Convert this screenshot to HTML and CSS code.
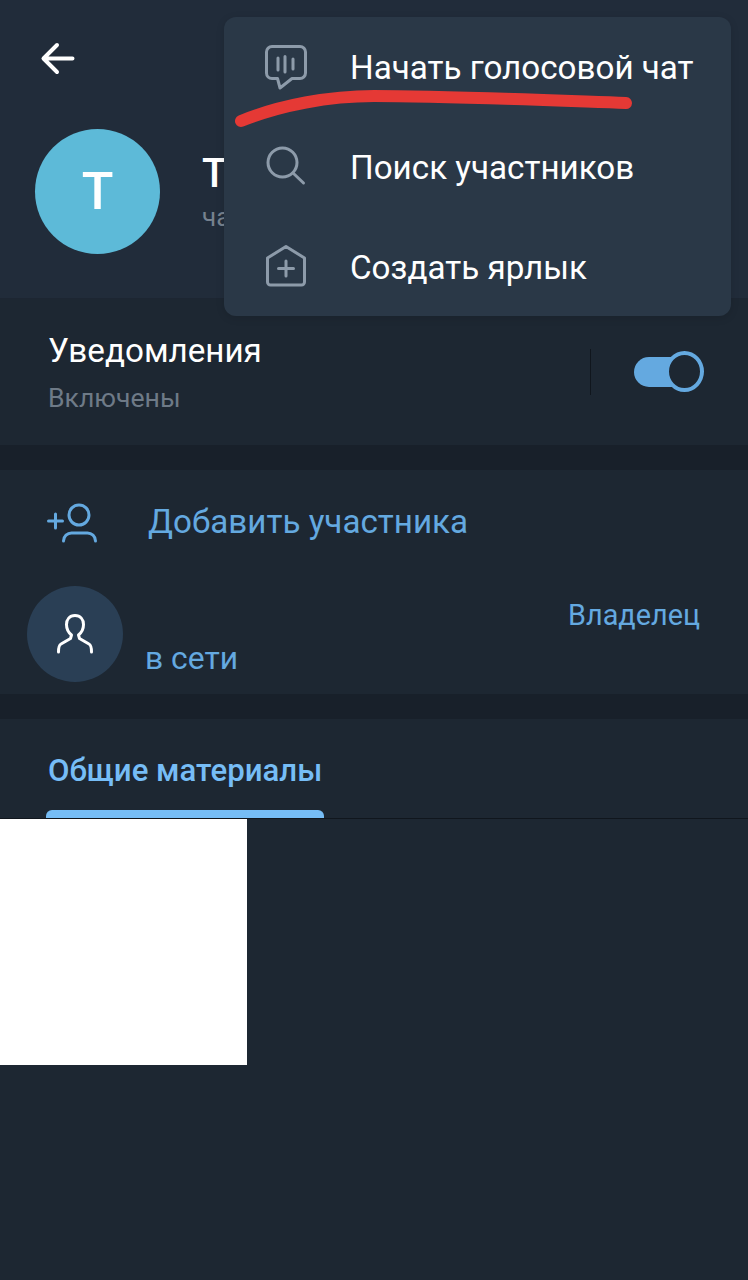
FILE: index.html
```html
<!DOCTYPE html>
<html lang="ru">
<head>
<meta charset="utf-8">
<title>Группа</title>
<link rel="stylesheet" href="styles.css">
</head>
<body>
<div class="page">
  <header class="header">
    <svg class="back" width="36" height="36" viewBox="0 0 36 36"><path d="M32.500 17.500H4M17 4 3.500 17.500 17 31" fill="none" stroke="#fff" stroke-width="4" stroke-linecap="round" stroke-linejoin="round"/></svg>
    <div class="profile">
      <div class="avatar">T</div>
      <div class="titles">
        <div class="title">T</div>
        <div class="subtitle">чат</div>
      </div>
    </div>
  </header>

  <section class="notify">
    <div class="notify-text">
      <div class="notify-title">Уведомления</div>
      <div class="notify-sub">Включены</div>
    </div>
    <div class="divider"></div>
    <div class="toggle"><div class="knob"></div></div>
  </section>

  <section class="members">
    <div class="add-row">
      <svg class="add-icon" width="50" height="42" viewBox="0 0 50 42"><g fill="none" stroke="#64a9e0" stroke-width="3" stroke-linecap="round"><path d="M1.500 20h14M8.500 13v14"/><circle cx="32" cy="14" r="10"/><path d="M16.500 40c0-5 4-8 8-8h16c4 0 8 3 8 8"/></g></svg>
      <div class="add-label">Добавить участника</div>
    </div>
    <div class="member-row">
      <div class="member-avatar">
        <svg width="40" height="44" viewBox="0 0 40 44"><g fill="none" stroke="#fff" stroke-width="3" stroke-linecap="round" stroke-linejoin="round"><path d="M20 3.500c-5.500 0-8.500 4-8.500 9 0 5 2.500 8.500 5 10.500l-1 3.500L6 32c-2 1-2.500 3-2.500 8M20 3.500c5.500 0 8.500 4 8.500 9 0 5-2.500 8.500-5 10.500l1 3.500L34 32c2 1 2.500 3 2.500 8"/></g></svg>
      </div>
      <div class="member-status">в сети</div>
      <div class="member-role">Владелец</div>
    </div>
  </section>

  <section class="media">
    <div class="tabs">
      <div class="tab">Общие материалы</div>
    </div>
    <div class="thumb"></div>
  </section>

  <div class="menu">
    <div class="menu-item">
      <svg class="menu-icon" width="44" height="46" viewBox="0 0 44 46"><g fill="none" stroke="#8d9baa" stroke-width="3" stroke-linecap="round" stroke-linejoin="round"><path d="M8 2.500h28a5.500 5.500 0 0 1 5.500 5.500v21a5.500 5.500 0 0 1-5.500 5.500h-8L16 44l-2.500-9.500H8A5.500 5.500 0 0 1 2.500 29V8A5.500 5.500 0 0 1 8 2.500z"/><path d="M14 14v12M21 12.500v15.500M29 15v10"/></g></svg>
      <span>Начать голосовой чат</span>
    </div>
    <div class="menu-item">
      <svg class="menu-icon" width="44" height="46" viewBox="0 0 44 46"><g fill="none" stroke="#8d9baa" stroke-width="3" stroke-linecap="round"><circle cx="18.500" cy="18.500" r="14.500"/><path d="M29 29l10.500 10"/></g></svg>
      <span>Поиск участников</span>
    </div>
    <div class="menu-item">
      <svg class="menu-icon" width="44" height="46" viewBox="0 0 44 46"><g fill="none" stroke="#8d9baa" stroke-width="3" stroke-linecap="round" stroke-linejoin="round"><path d="M22 2.500 3.500 14v24a3 3 0 0 0 3 3h31a3 3 0 0 0 3-3V14z"/><path d="M22 17v15M14.500 24.500h15"/></g></svg>
      <span>Создать ярлык</span>
    </div>
  </div>

  <svg class="scribble" width="748" height="130" viewBox="0 0 748 130"><path d="M241 121C280 105 330 96 374 96 440 96 540 100 626 103" fill="none" stroke="#e53935" stroke-width="12" stroke-linecap="round"/></svg>
</div>
</body>
</html>
```
FILE: styles.css
```css
* { box-sizing: border-box; }
html, body { margin: 0; padding: 0; }
body { background: #18202a; font-family: Roboto, "Noto Sans", sans-serif; }

.page { position: relative; width: 748px; height: 1280px; overflow: hidden; background: #18202a; display: flex; flex-direction: column; }

.header { height: 299px; flex: none; background: #212c3a; padding: 41px 0 0 40px; border-bottom: 1px solid #1d2632; }
.back { display: block; }
.profile { display: flex; align-items: center; gap: 42px; margin: 52px 0 0 -5px; }
.avatar { width: 125px; height: 125px; border-radius: 50%; background: #5dbad8; color: #fff; font-size: 52px; font-weight: 500; display: flex; align-items: center; justify-content: center; }
.title { color: #fff; font-size: 41px; font-weight: 500; line-height: 48px; }
.subtitle { color: #76828f; font-size: 26px; line-height: 36px; margin-top: 2px; }

.notify { height: 146px; flex: none; display: flex; align-items: flex-start; padding: 28px 44px 0 48px; background: #1d2732; }
.notify-text { flex: 1; padding-top: 1px; }
.notify-title { color: #fff; font-size: 33.200px; line-height: 46px; }
.notify-sub { color: #6e7a87; font-size: 26.600px; line-height: 36px; margin-top: 6px; }
.divider { width: 1px; height: 46px; margin: 22px 43px 0 0; background: #10161d; }
.toggle { position: relative; width: 70px; height: 30px; margin-top: 30px; }
.toggle::before { content: ""; position: absolute; left: 0; top: 0; width: 56px; height: 30px; border-radius: 15px; background: #64a9e0; }
.knob { position: absolute; right: 0; top: -6px; width: 39px; height: 41px; border-radius: 50%; border: 4px solid #64a9e0; background: #1d2732; }

.members { margin-top: 25px; height: 224px; flex: none; background: #1d2732; padding: 0 48px 0 27px; }
.add-row { display: flex; align-items: center; height: 104px; padding: 0 0 0 20px; }
.add-icon { flex: none; }
.add-label { margin: -2px 0 0 51px; color: #64a9e0; font-size: 33.200px; }
.member-row { display: flex; margin-top: 12px; }
.member-avatar { flex: none; width: 96px; height: 96px; border-radius: 50%; background: #2a3f55; display: flex; align-items: center; justify-content: center; }
.member-status { flex: 1; margin: 54px 0 0 22px; color: #64a9e0; font-size: 31.800px; line-height: 36px; }
.member-role { color: #64a9e0; font-size: 28.800px; line-height: 36px; margin-top: 11px; }

.media { margin-top: 25px; flex: 1; background: #1d2732; }
.tabs { height: 100px; border-bottom: 1px solid #10161d; padding: 0 0 0 46px; }
.tab { position: relative; width: 278px; height: 99px; padding: 33px 0 0 2px; color: #76bdf6; font-size: 31.200px; font-weight: 500; line-height: 38px; white-space: nowrap; }
.tab::after { content: ""; position: absolute; left: 0; bottom: 0; width: 278px; height: 8px; border-radius: 6px 6px 0 0; background: #76bdf6; }
.thumb { width: 247px; height: 246px; background: #fff; }

.menu { position: absolute; left: 224px; top: 17px; width: 507px; height: 299px; border-radius: 12px; background: #2a3847; box-shadow: 0 2px 8px rgba(0, 0, 0, .12); }
.menu-item { display: flex; align-items: center; height: 100px; padding-left: 40px; color: #fff; font-size: 33.200px; white-space: nowrap; }
.menu-item span { margin-left: 42px; }
.menu-icon { flex: none; }

.scribble { position: absolute; left: 0; top: 0; pointer-events: none; filter: blur(.7px); }
```
